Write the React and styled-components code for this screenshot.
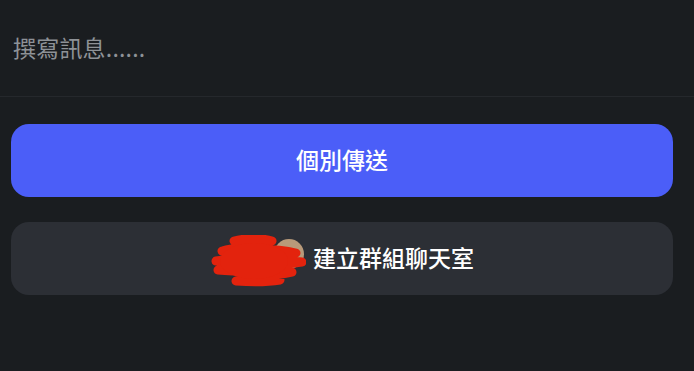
import React from "react";
import styled, { createGlobalStyle } from "styled-components";

const GlobalStyle = createGlobalStyle`
  html, body {
    margin: 0;
    padding: 0;
    background: #1a1d20;
  }
  body {
    font-family: "Noto Sans CJK TC", "Noto Sans", sans-serif;
  }
`;

const Screen = styled.div`
  width: 694px;
  height: 371px;
  background: #1a1d20;
  display: flex;
  flex-direction: column;
  overflow: hidden;
`;

const Composer = styled.div`
  height: 97px;
  display: flex;
  align-items: center;
  padding: 0 13px;
  border-bottom: 1px solid #25282c;
  box-sizing: border-box;
`;

const Placeholder = styled.span`
  font-size: 23px;
  color: #8e9297;
  line-height: 1;
  margin-top: -2px;
  letter-spacing: 0.2px;
`;

const Actions = styled.div`
  display: flex;
  flex-direction: column;
  gap: 25px;
  padding: 27px 21px 0 11px;
`;

const ActionButton = styled.button`
  height: 73px;
  border: none;
  border-radius: 18px;
  background: ${(p) => (p.$primary ? "#4b5ef8" : "#2c2f35")};
  color: #ffffff;
  font-family: inherit;
  font-size: 23px;
  font-weight: 500;
  display: flex;
  align-items: center;
  justify-content: center;
  gap: 7px;
  padding: 0;
  cursor: pointer;
`;

const Label = styled.span`
  line-height: 1;
  margin-top: -2px;
`;

const AvatarGroup = styled.span`
  position: relative;
  width: 96px;
  height: 52px;
  display: inline-block;
  margin-top: 4px;
`;

const Avatar = styled.span`
  position: absolute;
  right: 2px;
  top: 4px;
  width: 30px;
  height: 30px;
  border-radius: 50%;
  background: #b89a7a;
`;

const Scribble = styled.svg`
  position: absolute;
  inset: 0;
`;

function RedactedAvatars() {
  return (
    <AvatarGroup>
      <Avatar />
      <Scribble width="96" height="52" viewBox="0 0 96 52">
        <g fill="none" stroke="#e3230d" strokeWidth="9" strokeLinecap="round" strokeLinejoin="round">
          <path d="M24 6 C36 3 52 3 62 6 C48 10 28 12 12 16 C36 14 66 13 86 18 C62 21 30 22 6 26 C30 25 62 24 92 27 C66 31 34 32 8 35 C30 37 56 36 82 37 C62 41 42 43 26 46 C40 47 58 47 70 45" />
        </g>
        <ellipse cx="44" cy="26" rx="34" ry="18" fill="#e3230d" />
      </Scribble>
    </AvatarGroup>
  );
}

export default function App() {
  return (
    <>
      <GlobalStyle />
      <Screen>
        <Composer>
          <Placeholder>撰寫訊息......</Placeholder>
        </Composer>
        <Actions>
          <ActionButton $primary>
            <Label>個別傳送</Label>
          </ActionButton>
          <ActionButton>
            <RedactedAvatars />
            <Label>建立群組聊天室</Label>
          </ActionButton>
        </Actions>
      </Screen>
    </>
  );
}
